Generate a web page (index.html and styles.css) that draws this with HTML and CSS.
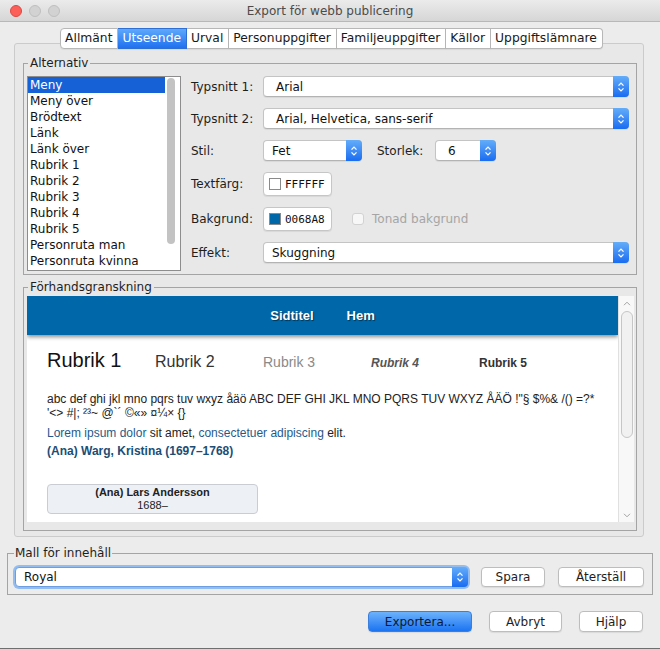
FILE: index.html
```html
<!DOCTYPE html>
<html lang="sv">
<head>
<meta charset="utf-8">
<title>Export för webb publicering</title>
<link rel="stylesheet" href="styles.css">
</head>
<body>
<div class="window">
  <header class="titlebar">
    <div class="lights"><span class="light red"></span><span class="light"></span><span class="light"></span></div>
    <div class="title">Export för webb publicering</div>
    <div></div>
  </header>

  <nav class="tabs">
    <span class="tab">Allmänt</span><span class="tab active">Utseende</span><span class="tab">Urval</span><span class="tab">Personuppgifter</span><span class="tab">Familjeuppgifter</span><span class="tab">Källor</span><span class="tab">Uppgiftslämnare</span>
  </nav>

  <section class="pane">
    <fieldset class="group alt">
      <legend>Alternativ</legend>
      <div class="alt-body">
        <div class="list">
          <ul class="items">
            <li class="sel">Meny</li>
            <li>Meny över</li>
            <li>Brödtext</li>
            <li>Länk</li>
            <li>Länk över</li>
            <li>Rubrik 1</li>
            <li>Rubrik 2</li>
            <li>Rubrik 3</li>
            <li>Rubrik 4</li>
            <li>Rubrik 5</li>
            <li>Personruta man</li>
            <li>Personruta kvinna</li>
          </ul>
          <div class="vscroll"><div class="vthumb"></div></div>
        </div>

        <div class="form">
          <span class="lbl">Typsnitt 1:</span>
          <div class="combo edit"><span class="val">Arial</span><span class="stepper"><svg width="8" height="12" viewBox="0 0 8 12"><path d="M1.5 4.6 4 2.1l2.5 2.5M1.5 7.4 4 9.9l2.5-2.5" fill="none" stroke="#fff" stroke-width="1.3"/></svg></span></div>

          <span class="lbl">Typsnitt 2:</span>
          <div class="combo edit"><span class="val">Arial, Helvetica, sans-serif</span><span class="stepper"><svg width="8" height="12" viewBox="0 0 8 12"><path d="M1.5 4.6 4 2.1l2.5 2.5M1.5 7.4 4 9.9l2.5-2.5" fill="none" stroke="#fff" stroke-width="1.3"/></svg></span></div>

          <span class="lbl">Stil:</span>
          <div class="row-inline">
            <div class="combo w-stil"><span class="val">Fet</span><span class="stepper"><svg width="8" height="12" viewBox="0 0 8 12"><path d="M1.5 4.6 4 2.1l2.5 2.5M1.5 7.4 4 9.9l2.5-2.5" fill="none" stroke="#fff" stroke-width="1.3"/></svg></span></div>
            <span class="lbl inl">Storlek:</span>
            <div class="combo edit w-size"><span class="val">6</span><span class="stepper"><svg width="8" height="12" viewBox="0 0 8 12"><path d="M1.5 4.6 4 2.1l2.5 2.5M1.5 7.4 4 9.9l2.5-2.5" fill="none" stroke="#fff" stroke-width="1.3"/></svg></span></div>
          </div>

          <span class="lbl">Textfärg:</span>
          <div class="row-inline">
            <div class="colorbtn"><span class="swatch"></span><span class="hex">FFFFFF</span></div>
          </div>

          <span class="lbl">Bakgrund:</span>
          <div class="row-inline">
            <div class="colorbtn"><span class="swatch blue"></span><span class="hex">0068A8</span></div>
            <span class="check"></span>
            <span class="disabled">Tonad bakgrund</span>
          </div>

          <span class="lbl">Effekt:</span>
          <div class="combo"><span class="val">Skuggning</span><span class="stepper"><svg width="8" height="12" viewBox="0 0 8 12"><path d="M1.5 4.6 4 2.1l2.5 2.5M1.5 7.4 4 9.9l2.5-2.5" fill="none" stroke="#fff" stroke-width="1.3"/></svg></span></div>
        </div>
      </div>
    </fieldset>

    <fieldset class="group pv">
      <legend>Förhandsgranskning</legend>
      <div class="preview">
        <div class="page">
          <div class="phead"><span>Sidtitel</span><span>Hem</span></div>
          <div class="rubriker">
            <h1 class="r1">Rubrik 1</h1>
            <h2 class="r2">Rubrik 2</h2>
            <h3 class="r3">Rubrik 3</h3>
            <h4 class="r4">Rubrik 4</h4>
            <h5 class="r5">Rubrik 5</h5>
          </div>
          <div class="ptext">
            <p>abc def ghi jkl mno pqrs tuv wxyz åäö ABC DEF GHI JKL MNO PQRS TUV WXYZ ÅÄÖ !"§ $%&amp; /() =?*<br>'&lt;&gt; #|; ²³~ @`´ ©«» ¤¼× {}</p>
            <p class="lorem"><span class="lk">Lorem ipsum dolor</span> sit amet, <span class="lk">consectetuer adipiscing</span> elit.</p>
            <p class="warg">(Ana) Warg, Kristina (1697–1768)</p>
          </div>
          <div class="person">
            <div class="pname">(Ana) Lars Andersson</div>
            <div class="pyear">1688–</div>
          </div>
        </div>
        <div class="pscroll">
          <div class="parrow"><svg width="8" height="5" viewBox="0 0 8 5"><path d="M1 4.2 4 1.2l3 3" fill="none" stroke="#a2a2a2" stroke-width="1"/></svg></div>
          <div class="pthumb"></div>
          <div class="pspace"></div>
          <div class="parrow"><svg width="8" height="5" viewBox="0 0 8 5"><path d="M1 0.8 4 3.8l3-3" fill="none" stroke="#a2a2a2" stroke-width="1"/></svg></div>
        </div>
      </div>
    </fieldset>
  </section>

  <fieldset class="group mall">
    <legend>Mall för innehåll</legend>
    <div class="mall-row">
      <div class="combo grow focus"><span class="val">Royal</span><span class="stepper"><svg width="8" height="12" viewBox="0 0 8 12"><path d="M1.5 4.6 4 2.1l2.5 2.5M1.5 7.4 4 9.9l2.5-2.5" fill="none" stroke="#fff" stroke-width="1.3"/></svg></span></div>
      <button class="btn spara">Spara</button>
      <button class="btn aterstall">Återställ</button>
    </div>
  </fieldset>

  <div class="actions">
    <button class="btn primary exp">Exportera...</button>
    <button class="btn avbryt">Avbryt</button>
    <button class="btn hjalp">Hjälp</button>
  </div>
</div>
</body>
</html>
```
FILE: styles.css
```css
* { box-sizing: border-box; }
html, body { margin: 0; padding: 0; }
body {
  background: #ececec;
  font-family: "DejaVu Sans", "Noto Sans", sans-serif;
  font-size: 12px;
  color: #1e1e1e;
}
.window {
  width: 660px;
  height: 649px;
  display: flex;
  flex-direction: column;
  border-bottom: 1px solid #6f6f6f;
  overflow: hidden;
}

/* title bar */
.titlebar {
  height: 22px;
  flex: none;
  display: grid;
  grid-template-columns: 1fr auto 1fr;
  align-items: center;
  background: linear-gradient(#ebebeb, #d6d6d6);
  border-bottom: 1px solid #b8b8b8;
}
.lights { display: flex; gap: 7px; padding-left: 10px; }
.light {
  width: 12px; height: 12px; border-radius: 50%;
  background: #d2d2d2; border: 1px solid #bfbfbf;
}
.light.red { background: #fc5f57; border-color: #de4743; }
.title { color: #4b4b4b; font-size: 12px; }

/* tabs */
.tabs {
  display: flex;
  justify-content: center;
  margin-top: 6px;
  height: 21px;
  flex: none;
  position: relative;
  z-index: 1;
  padding-left: 3px;
}
.tab {
  padding: 0 5px 0 4px;
  line-height: 19px;
  background: #fff;
  border: 1px solid #b7b7b7;
  border-left: none;
  color: #1a1a1a;
  box-shadow: 0 1px 1px rgba(0,0,0,.06);
  font-size: 12.3px;
}
.tab:first-child { border-left: 1px solid #b7b7b7; border-radius: 4px 0 0 4px; }
.tab:last-child { border-radius: 0 4px 4px 0; }
.tab.active {
  background: linear-gradient(#5ea9fa, #1f70f0);
  color: #fff;
  border-color: #2e6fd6;
}

/* tab pane */
.pane {
  margin: -6px 16px 0 14px;
  border: 1px solid #cbcbcb;
  border-radius: 3px;
  background: #e8e8e8;
  padding: 12px 6px 5px 8px;
  flex: none;
}
.group {
  margin: 0;
  border: 1px solid #a4a4a4;
  padding: 0;
  min-width: 0;
}
.group > legend {
  padding: 0 2px;
  margin-left: 1px;
  font-size: 12px;
  line-height: 14px;
  color: #1e1e1e;
}

/* Alternativ */
.alt { padding: 6px 7px 3px 3px; }
.alt-body { display: flex; align-items: flex-start; }
.list {
  width: 154px;
  height: 195px;
  flex: none;
  border: 1px solid #8d8d8d;
  background: #fff;
  display: flex;
}
.items { flex: 1; list-style: none; margin: 0; padding: 0; }
.items li {
  height: 16px;
  line-height: 16px;
  padding-left: 2px;
  white-space: nowrap;
  color: #111;
}
.items li.sel { background: #1761d7; color: #fff; }
.vscroll { width: 15px; flex: none; padding: 1px 0 0 2px; }
.vthumb { width: 8px; height: 166px; border-radius: 4px; background: #c3c3c3; }

.form {
  flex: 1;
  margin-left: 10px;
  display: grid;
  grid-template-columns: 72px 1fr;
  grid-template-rows: 21px 21px 21px 24px 24px 21px;
  row-gap: 11px;
  align-items: center;
}
.lbl { white-space: nowrap; color: #1e1e1e; }
.row-inline { display: flex; align-items: center; height: 100%; }

.combo {
  height: 21px;
  display: flex;
  align-items: center;
  background: #fff;
  border: 1px solid #c4c4c4;
  border-bottom-color: #b3b3b3;
  border-radius: 4px;
  box-shadow: 0 1px 1px rgba(0,0,0,.07);
}
.combo .val { flex: 1; padding-left: 8px; white-space: nowrap; overflow: hidden; color: #111; }
.combo.edit .val { padding-left: 12px; }
.stepper {
  width: 16px;
  flex: none;
  align-self: stretch;
  margin: -1px -1px -1px 0;
  border-radius: 0 4px 4px 0;
  background: linear-gradient(#64adfa, #1a6cf1);
  display: flex;
  align-items: center;
  justify-content: center;
}
.stepper svg { display: block; }
.combo.w-stil { width: 99px; }
.combo.w-size { width: 61px; }
.lbl.inl { margin-left: 15px; width: 58px; }

.colorbtn {
  width: 69px;
  height: 24px;
  display: flex;
  align-items: center;
  padding-left: 5px;
  background: #fff;
  border: 1px solid #c6c6c6;
  border-radius: 4px;
  box-shadow: 0 1px 1px rgba(0,0,0,.07);
}
.swatch { width: 12px; height: 12px; border: 1px solid #8a8a8a; margin-right: 4px; background: #fff; }
.swatch.blue { background: #0068a8; }
.hex { font-family: "DejaVu Sans Mono", monospace; font-size: 11px; color: #111; }
.check {
  width: 12px; height: 12px;
  border: 1px solid #d2d2d2;
  border-radius: 3px;
  background: #f7f7f7;
  margin-left: 20px;
}
.disabled { color: #a5a5a5; margin-left: 8px; }

/* preview */
.pv { margin-top: 5px; padding: 2px 2px 8px 3px; }
.preview { display: flex; height: 226px; }
.page {
  flex: 1;
  background: #fff;
  overflow: hidden;
  font-family: "Liberation Sans", Arial, sans-serif;
  font-size: 12px;
  color: #222;
}
.phead {
  height: 39px;
  background: #0068a8;
  box-shadow: 0 2px 4px rgba(0,0,0,.45);
  display: flex;
  justify-content: center;
  align-items: center;
  gap: 33px;
  color: #fff;
  font-weight: bold;
  font-size: 13px;
  text-shadow: 1px 1px 1px rgba(0,0,0,.5);
}
.rubriker {
  display: flex;
  align-items: baseline;
  padding-left: 20px;
  margin-top: 14px;
  line-height: 23px;
}
.rubriker > * { width: 108px; flex: none; margin: 0; white-space: nowrap; }
.r1 { font-size: 20px; color: #111; font-weight: normal; }
.r2 { font-size: 16px; color: #333; font-weight: normal; }
.r3 { font-size: 14px; color: #8a8a8a; font-weight: normal; }
.r4 { font-size: 12px; font-style: italic; font-weight: bold; color: #555; }
.r5 { font-size: 12px; font-weight: bold; color: #333; }
.ptext { padding-left: 20px; margin-top: 17px; line-height: 14px; }
.ptext p { margin: 0; }
.ptext .lorem { margin-top: 6px; color: #222; }
.lk { color: #1f5a8a; }
.ptext .warg { margin-top: 4px; font-weight: bold; color: #1c4e75; }
.person {
  margin: 26px 0 0 20px;
  width: 211px;
  height: 30px;
  border: 1px solid #c9cdd3;
  border-radius: 4px;
  background: #edf1f6;
  text-align: center;
  font-size: 11px;
  line-height: 13px;
  padding-top: 1px;
  color: #222;
}
.pname { font-weight: bold; }
.pscroll {
  width: 16px;
  flex: none;
  background: #f8f8f8;
  border-left: 1px solid #e0e0e0;
  display: flex;
  flex-direction: column;
  align-items: center;
}
.parrow { height: 14px; display: flex; align-items: center; justify-content: center; }
.pthumb {
  width: 12px;
  height: 127px;
  margin-top: 1px;
  border: 1px solid #c6c6c6;
  border-radius: 6px;
  background: #f1f1f1;
}
.pspace { flex: 1; }

/* Mall */
.mall { margin: 9px 7px 0 7px; padding: 7px 8px 7px 7px; flex: none; }
.mall > legend { margin-left: -1px; padding: 0 1px; }
.mall-row { display: flex; align-items: center; gap: 13px; }
.combo.grow { flex: 1; height: 20px; }
.combo.focus { border-color: #6d9fe0; box-shadow: 0 0 0 2px #93bdf0; }

.btn {
  height: 20px;
  padding: 0;
  background: #fff;
  border: 1px solid #bdbdbd;
  border-radius: 4px;
  display: flex;
  align-items: center;
  justify-content: center;
  font-family: inherit;
  font-size: 12px;
  color: #1e1e1e;
  box-shadow: 0 1px 1px rgba(0,0,0,.08);
}
.btn.spara { width: 64px; }
.btn.aterstall { width: 86px; }

.actions {
  display: flex;
  justify-content: flex-end;
  gap: 17px;
  margin-top: 16px;
  padding-right: 17px;
  flex: none;
}
.actions .btn { height: 21px; }
.btn.exp { width: 104px; }
.btn.avbryt { width: 73px; }
.btn.hjalp { width: 64px; }
.btn.primary {
  background: linear-gradient(#6cb2fb, #1c74f2);
  border-color: #3a7fdd;
  color: #0d1a2e;
}
```
